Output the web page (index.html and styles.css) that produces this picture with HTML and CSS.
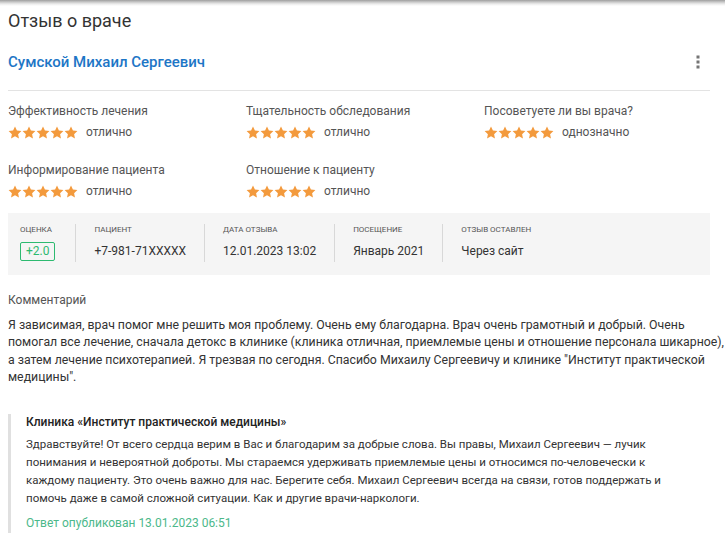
FILE: index.html
```html
<!DOCTYPE html>
<html lang="ru">
<head>
<meta charset="utf-8">
<link rel="stylesheet" href="styles.css">
</head>
<body>
<div class="topshadow"></div>
<div class="page">
  <h1 class="title">Отзыв о враче</h1>
  <div class="doctor">
    <a class="doctor-name">Сумской Михаил Сергеевич</a>
    <svg class="more" width="4" height="14" viewBox="0 0 4 14"><rect x="0.5" y="0.5" width="3" height="3" fill="#757575"/><rect x="0.5" y="5.5" width="3" height="3" fill="#757575"/><rect x="0.5" y="10.5" width="3" height="3" fill="#757575"/></svg>
  </div>
  <div class="divider"></div>
  <div class="ratings">
    <div class="rating">
      <div class="r-label">Эффективность лечения</div>
      <div class="r-value"><span class="stars"></span><span class="r-text">отлично</span></div>
    </div>
    <div class="rating">
      <div class="r-label">Тщательность обследования</div>
      <div class="r-value"><span class="stars"></span><span class="r-text">отлично</span></div>
    </div>
    <div class="rating">
      <div class="r-label">Посоветуете ли вы врача?</div>
      <div class="r-value"><span class="stars"></span><span class="r-text">однозначно</span></div>
    </div>
    <div class="rating">
      <div class="r-label">Информирование пациента</div>
      <div class="r-value"><span class="stars"></span><span class="r-text">отлично</span></div>
    </div>
    <div class="rating">
      <div class="r-label">Отношение к пациенту</div>
      <div class="r-value"><span class="stars"></span><span class="r-text">отлично</span></div>
    </div>
  </div>
  <div class="info">
    <div class="info-col first">
      <div class="i-label">Оценка</div>
      <div class="i-value"><span class="badge">+2.0</span></div>
    </div>
    <div class="info-col">
      <div class="i-label">Пациент</div>
      <div class="i-value">+7-981-71XXXXX</div>
    </div>
    <div class="info-col">
      <div class="i-label">Дата отзыва</div>
      <div class="i-value">12.01.2023 13:02</div>
    </div>
    <div class="info-col">
      <div class="i-label">Посещение</div>
      <div class="i-value">Январь 2021</div>
    </div>
    <div class="info-col">
      <div class="i-label">Отзыв оставлен</div>
      <div class="i-value">Через сайт</div>
    </div>
  </div>
  <div class="c-label">Комментарий</div>
  <p class="comment">Я зависимая, врач помог мне решить моя проблему. Очень ему благодарна. Врач очень грамотный и добрый. Очень<br>помогал все лечение, сначала детокс в клинике (клиника отличная, приемлемые цены и отношение персонала шикарное), а затем лечение психотерапией. Я трезвая по сегодня. Спасибо Михаилу Сергеевичу и клинике "Институт практической медицины".</p>
  <div class="reply">
    <div class="reply-title">Клиника «Институт практической медицины»</div>
    <p class="reply-text">Здравствуйте! От всего сердца верим в Вас и благодарим за добрые слова. Вы правы, Михаил Сергеевич — лучик понимания и невероятной доброты. Мы стараемся удерживать приемлемые цены и относимся по-человечески к каждому пациенту. Это очень важно для нас. Берегите себя. Михаил Сергеевич всегда на связи, готов поддержать и помочь даже в самой сложной ситуации. Как и другие врачи-наркологи.</p>
    <div class="reply-date">Ответ опубликован 13.01.2023 06:51</div>
  </div>
</div>
<script>
document.querySelectorAll('.stars').forEach(function(s){
  var h='';
  for(var i=0;i<5;i++){h+='<svg width="14" height="13" viewBox="0 0 24 23"><path d="M12 0.8l3.4 7.2 7.9 1-5.8 5.4 1.5 7.8L12 18.3l-7 3.9 1.5-7.8L0.7 9l7.9-1z" fill="#f39a3d"/></svg>';}
  s.innerHTML=h;
});
</script>
</body>
</html>
```

FILE: styles.css
```css
* { box-sizing: border-box; }
html, body { margin: 0; padding: 0; background: #fff; }
body { font-family: Roboto, "Noto Sans", Arial, sans-serif; color: #333; overflow-x: hidden; }
.topshadow {
  height: 6px;
  background: linear-gradient(to bottom, #9e9e9e 0px, #c8c8c8 2px, #ececec 4px, #fff 6px);
}
.page { padding: 0 8px; overflow: hidden; }
.title {
  margin: 3px 0 0;
  font-size: 18px;
  font-weight: 400;
  line-height: 24px;
  color: #333;
}
.doctor {
  display: flex;
  align-items: center;
  justify-content: space-between;
  margin-top: 17px;
  padding-right: 17px;
  height: 24px;
}
.doctor-name {
  color: #1d76c6;
  font-size: 15px;
  font-weight: 500;
}
.more { display: block; }
.divider {
  height: 1px;
  background: #e3e3e3;
  margin-top: 16px;
  width: 702px;
}
.ratings {
  display: grid;
  grid-template-columns: 238px 238px 238px;
  row-gap: 23px;
  margin-top: 12px;
}
.r-label { font-size: 12px; line-height: 16px; color: #555; }
.r-value { display: flex; align-items: center; margin-top: 6px; height: 14px; }
.stars { display: flex; gap: 0; }
.stars svg { display: block; }
.r-text { font-size: 12px; color: #555; margin-left: 8px; }
.info {
  display: flex;
  background: #f5f5f5;
  width: 702px;
  margin-top: 15px;
  padding: 11px 12px 13px;
  height: 62px;
}
.info-col {
  padding: 0 18px;
  border-left: 1px solid #d8d8d8;
}
.info-col.first { padding-left: 0; border-left: none; padding-right: 20px; }
.i-label {
  font-size: 8px;
  text-transform: uppercase;
  color: #555;
  line-height: 10px;
  margin-top: 1px;
}
.i-value {
  font-size: 12px;
  color: #333;
  margin-top: 7px;
  line-height: 19px;
}
.badge {
  display: inline-block;
  border: 1px solid #2dba70;
  color: #2dba70;
  border-radius: 2px;
  padding: 0 5px;
  line-height: 17px;
  font-size: 12px;
}
.c-label {
  margin-top: 17px;
  font-size: 12px;
  color: #555;
  line-height: 16px;
}
.comment {
  margin: 9px 0 0;
  font-size: 12.3px;
  line-height: 17.3px;
  color: #333;
  width: 720px;
}
.reply {
  margin-top: 28px;
  border-left: 3px solid #e0e0e0;
  padding: 0 0 2px 15px;
  width: 685px;
}
.reply-title {
  font-size: 12px;
  font-weight: 500;
  color: #222;
  line-height: 16px;
}
.reply-text {
  margin: 5px 0 0;
  font-size: 11.5px;
  line-height: 18px;
  color: #333;
}
.reply-date {
  margin-top: 8px;
  font-size: 12px;
  color: #4cb88a;
  line-height: 16px;
}
```
